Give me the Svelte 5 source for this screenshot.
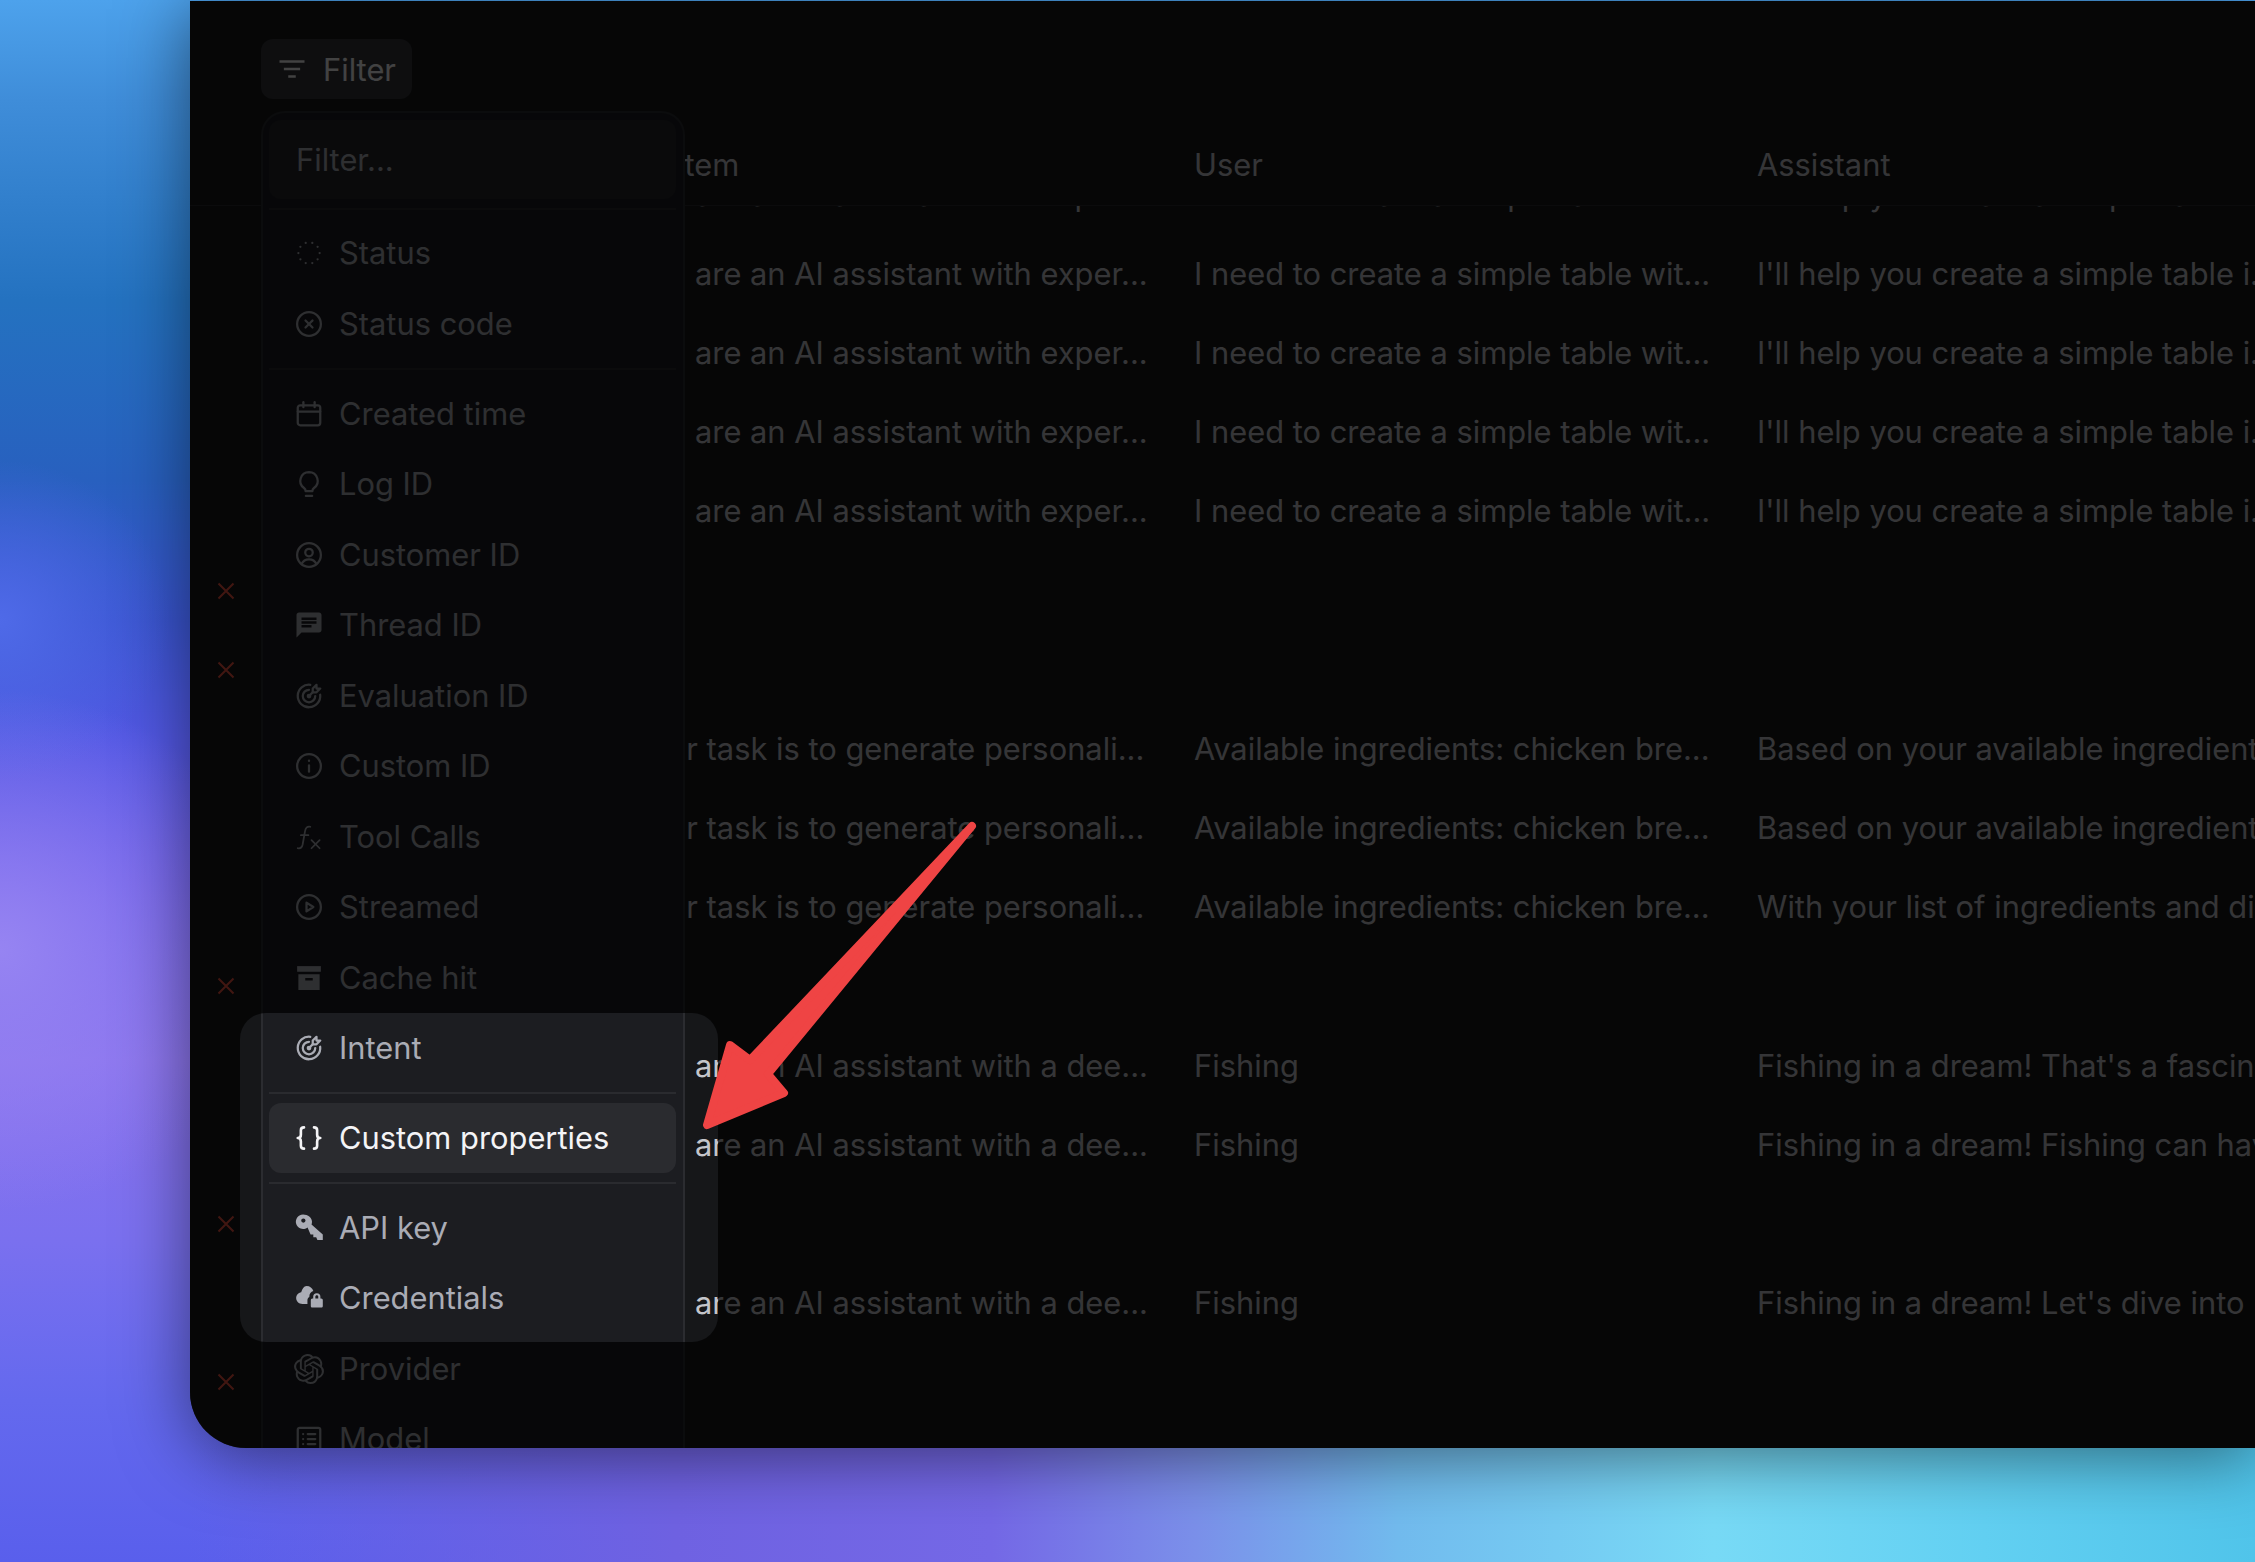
<script>
  const sysChart = "You are an AI assistant with exper...";
  const userChart = "I need to create a simple table wit...";
  const asstChart = "I'll help you create a simple table i...";
  const sysRecipe = "Your task is to generate personali...";
  const userRecipe = "Available ingredients: chicken bre...";
  const sysDream = "You are an AI assistant with a dee...";

  const rows = [
    { sys: sysChart, user: userChart, asst: asstChart },
    { sys: sysChart, user: userChart, asst: asstChart },
    { sys: sysChart, user: userChart, asst: asstChart },
    { sys: sysChart, user: userChart, asst: asstChart },
    { sys: sysChart, user: userChart, asst: asstChart },
    { failed: true },
    { failed: true },
    { sys: sysRecipe, user: userRecipe, asst: "Based on your available ingredients, I can suggest" },
    { sys: sysRecipe, user: userRecipe, asst: "Based on your available ingredients, I can suggest" },
    { sys: sysRecipe, user: userRecipe, asst: "With your list of ingredients and dietary needs" },
    { failed: true },
    { sys: sysDream, user: "Fishing", asst: "Fishing in a dream! That's a fascinating image" },
    { sys: sysDream, user: "Fishing", asst: "Fishing in a dream! Fishing can have many" },
    { failed: true },
    { sys: sysDream, user: "Fishing", asst: "Fishing in a dream! Let's dive into" },
    { failed: true }
  ];

  // ring of dots for the status icon
  const dotRing = Array.from({ length: 10 }, (_, i) => {
    const a = (i / 10) * Math.PI * 2;
    const x = (12 + 8.5 * Math.cos(a)).toFixed(2);
    const y = (12 + 8.5 * Math.sin(a)).toFixed(2);
    return `M${x} ${y}v.01`;
  });

  // icon paths on a 24 box; fill icons use the solid flag
  const icons = {
    filter: { d: ["M3 6h18", "M6.5 12h11", "M10 18h4"] },
    dots: { d: dotRing },
    xcircle: { d: ["M12 2.500a9.500 9.500 0 1 0 0 19a9.500 9.500 0 1 0 0-19z", "M9.200 9.200l5.600 5.600", "M14.800 9.200l-5.600 5.600"] },
    calendar: { d: ["M5 5h14a2 2 0 0 1 2 2v12a2 2 0 0 1-2 2H5a2 2 0 0 1-2-2V7a2 2 0 0 1 2-2z", "M3 10h18", "M7.500 2.500v4", "M16.500 2.500v4"] },
    bulb: { d: ["M12 2.500a7 7 0 0 0-4 12.700c.8.6 1.300 1.500 1.300 2.500h5.400c0-1 .5-1.900 1.300-2.500a7 7 0 0 0-4-12.700z", "M9.500 21.500h5"] },
    user: { d: ["M12 2.500a9.500 9.500 0 1 0 0 19a9.500 9.500 0 1 0 0-19z", "M12 7a3 3 0 1 0 0 6a3 3 0 1 0 0-6z", "M6.200 19c1-2.400 3.200-3.600 5.800-3.600s4.800 1.200 5.800 3.600"] },
    chat: { solid: true, d: ["M20 2H4c-1.100 0-1.990.9-1.990 2L2 22l4-4h14c1.100 0 2-.9 2-2V4c0-1.100-.9-2-2-2zM6 9h12v2H6V9zm8 5H6v-2h8v2zm4-6H6V6h12v2z"] },
    target: { d: ["M12 11a1 1 0 1 0 0 2a1 1 0 1 0 0-2z", "M12 7a5 5 0 1 0 5 5", "M13 3.055a9 9 0 1 0 7.941 7.945", "M15 6v3h3l3-3h-3V3z", "M15 9l-3 3"] },
    info: { d: ["M12 2.500a9.500 9.500 0 1 0 0 19a9.500 9.500 0 1 0 0-19z", "M12 11.500v5", "M12 7.600v.3"] },
    fx: { thin: true, d: ["M3 21c2.200.4 3.400-.6 3.900-3l1.900-10.500C9.300 4.600 10.700 3.300 13 3.800", "M5.500 10.500h6", "M14 14.500l6.500 6.500", "M20.500 14.500L14 21"] },
    play: { d: ["M12 2.500a9.500 9.500 0 1 0 0 19a9.500 9.500 0 1 0 0-19z", "M10 8.500l5.500 3.500l-5.500 3.500z"] },
    archive: { solid: true, d: ["M2.500 2.500h19v4.500h-19z", "M3.500 9h17v12.500h-17zM9 12v2h6v-2z"] },
    braces: { heavy: true, d: ["M8 3.500c-1.700 0-2.500.8-2.500 2.300v3.500c0 1.700-.8 2.700-2.500 2.700c1.700 0 2.500 1 2.500 2.700v3.500c0 1.500.8 2.300 2.500 2.300", "M16 3.500c1.700 0 2.500.8 2.500 2.300v3.500c0 1.700.8 2.700 2.500 2.700c-1.700 0-2.500 1-2.500 2.700v3.500c0 1.500-.8 2.300-2.500 2.300"] },
    key: { solid: true, box: "-2 0 25 25", d: ["M7 1.500a6 6 0 0 1 5.600 8.100l9.400 8.400v4.500h-4.500l-1-2.300h-2.400v-2.300h-2.300L9.300 12a6 6 0 1 1-2.300-10.500zM5.800 4.500a1.800 1.800 0 1 0 0 3.600a1.800 1.800 0 0 0 0-3.600z"] },
    cloud: { solid: true, box: "-1 1 25 25", d: ["M9.500 3.500c2.700 0 4.900 1.700 5.600 4.100c-2 .6-3.300 2.300-3.300 4.400v.6c-1 .5-1.600 1.500-1.600 2.600v3.300H6c-3 0-5.200-2.200-5.200-4.900c0-2.400 1.800-4.500 4.200-4.800c.8-2.700 2.200-5.300 4.500-5.300z", "M18 9.500a3 3 0 0 1 3 3v1.500h.6c.9 0 1.400.6 1.400 1.400v4.700c0 .8-.5 1.400-1.400 1.400h-7.200c-.9 0-1.400-.6-1.400-1.400v-4.700c0-.8.5-1.400 1.400-1.400h.6v-1.500a3 3 0 0 1 3-3zm0 1.800c-.7 0-1.200.5-1.200 1.200v1.500h2.400v-1.500c0-.7-.5-1.200-1.200-1.200z"] },
    openai: { solid: true, d: ["M22.2819 9.8211a5.9847 5.9847 0 0 0-.5157-4.9108 6.0462 6.0462 0 0 0-6.5098-2.9A6.0651 6.0651 0 0 0 4.9807 4.1818a5.9847 5.9847 0 0 0-3.9977 2.9 6.0462 6.0462 0 0 0 .7427 7.0966 5.98 5.98 0 0 0 .511 4.9107 6.051 6.051 0 0 0 6.5146 2.9001A5.9847 5.9847 0 0 0 13.2599 24a6.0557 6.0557 0 0 0 5.7718-4.2058 5.9894 5.9894 0 0 0 3.9977-2.9001 6.0557 6.0557 0 0 0-.7475-7.0729zm-9.022 12.6081a4.4755 4.4755 0 0 1-2.8764-1.0408l.1419-.0804 4.7783-2.7582a.7948.7948 0 0 0 .3927-.6813v-6.7369l2.02 1.1686a.071.071 0 0 1 .038.052v5.5826a4.504 4.504 0 0 1-4.4945 4.4944zm-9.6607-4.1254a4.4708 4.4708 0 0 1-.5346-3.0137l.142.0852 4.783 2.7582a.7712.7712 0 0 0 .7806 0l5.8428-3.3685v2.3324a.0804.0804 0 0 1-.0332.0615L9.74 19.9502a4.4992 4.4992 0 0 1-6.1408-1.6464zM2.3408 7.8956a4.485 4.485 0 0 1 2.3655-1.9728V11.6a.7664.7664 0 0 0 .3879.6765l5.8144 3.3543-2.0201 1.1685a.0757.0757 0 0 1-.071 0l-4.8303-2.7865A4.504 4.504 0 0 1 2.3408 7.872zm16.5963 3.8558L13.1038 8.364 15.1192 7.2a.0757.0757 0 0 1 .071 0l4.8303 2.7913a4.4944 4.4944 0 0 1-.6765 8.1042v-5.6772a.79.79 0 0 0-.407-.667zm2.0107-3.0231l-.142-.0852-4.7735-2.7818a.7759.7759 0 0 0-.7854 0L9.409 9.2297V6.8974a.0662.0662 0 0 1 .0284-.0615l4.8303-2.7866a4.4992 4.4992 0 0 1 6.6802 4.66zM8.3065 12.863l-2.02-1.1638a.0804.0804 0 0 1-.038-.0567V6.0742a4.4992 4.4992 0 0 1 7.3757-3.4537l-.142.0805L8.704 5.459a.7948.7948 0 0 0-.3927.6813zm1.0976-2.3654l2.602-1.4998 2.6069 1.4998v2.9994l-2.5974 1.4997-2.6067-1.4997Z"] },
    list: { d: ["M4.500 3h15a1.500 1.500 0 0 1 1.500 1.500v15a1.500 1.500 0 0 1-1.500 1.500h-15A1.500 1.500 0 0 1 3 19.500v-15A1.500 1.500 0 0 1 4.500 3z", "M7.300 8h.01", "M7.300 12h.01", "M7.300 16h.01", "M11 8h6", "M11 12h6", "M11 16h6"] }
  };

  const groups = [
    [
      { icon: "dots", label: "Status" },
      { icon: "xcircle", label: "Status code" }
    ],
    [
      { icon: "calendar", label: "Created time" },
      { icon: "bulb", label: "Log ID" },
      { icon: "user", label: "Customer ID" },
      { icon: "chat", label: "Thread ID" },
      { icon: "target", label: "Evaluation ID" },
      { icon: "info", label: "Custom ID" },
      { icon: "fx", label: "Tool Calls" },
      { icon: "play", label: "Streamed" },
      { icon: "archive", label: "Cache hit" },
      { icon: "target", label: "Intent" }
    ],
    [{ icon: "braces", label: "Custom properties", active: true }],
    [
      { icon: "key", label: "API key" },
      { icon: "cloud", label: "Credentials" },
      { icon: "openai", label: "Provider" },
      { icon: "list", label: "Model" }
    ]
  ];
</script>

{#snippet glyph(name, cls)}
  {@const ic = icons[name]}
  <svg class={cls} class:solid={ic.solid} class:thin={ic.thin} class:heavy={ic.heavy} viewBox={ic.box ?? "0 0 24 24"} aria-hidden="true">
    {#each ic.d as d}
      <path {d} />
    {/each}
  </svg>
{/snippet}

<div class="page">
  <div class="window">
    <div class="toolbar">
      <button class="filter-btn">
        {@render glyph("filter", "btn-icon")}
        <span>Filter</span>
      </button>
    </div>

    <div class="thead">
      <div></div>
      <div></div>
      <div>System</div>
      <div>User</div>
      <div>Assistant</div>
    </div>

    <div class="tbody">
      <div class="rows">
        {#each rows as row}
          <div class="row">
            <div class="status">
              {#if row.failed}
                <svg class="cross" viewBox="0 0 18 18"><path d="M1.500 1.500l15 15M16.500 1.500l-15 15" /></svg>
              {/if}
            </div>
            <div></div>
            <div class="cell">{row.sys ?? ""}</div>
            <div class="cell">{row.user ?? ""}</div>
            <div class="cell">{row.asst ?? ""}</div>
          </div>
        {/each}
      </div>
    </div>

    <div class="menu">
      <div class="search">Filter...</div>
      {#each groups as group}
        <div class="sep"></div>
        {#each group as item}
          <div class="item" class:active={item.active}>
            {@render glyph(item.icon, "item-icon")}
            <span>{item.label}</span>
          </div>
        {/each}
      {/each}
    </div>

    <!-- dims everything but the highlighted part of the menu -->
    <div class="spotlight"></div>
  </div>

  <svg class="arrow" viewBox="0 0 300 330" aria-hidden="true">
    <polygon points="272,26 68,274 84,293 7,325 30,245 50,260" />
  </svg>
</div>

<style>
  :global(body) {
    margin: 0;
    overflow: hidden;
  }

  .page {
    position: relative;
    box-sizing: border-box;
    width: 2255px;
    height: 1562px;
    padding: 1px 0 114px 190px;
    display: flex;
    overflow: hidden;
    font-family: Inter, "Liberation Sans", sans-serif;
    background:
      linear-gradient(90deg, rgba(112, 100, 228, 0) 8.4%, #6f62e2 30%, #7468e6 44%, #7b90ea 53%, #72bbee 62%, #78daf6 76%, #62d0f2 88%, #50c4ea 100%) bottom / 100% 200px no-repeat,
      radial-gradient(ellipse 280px 260px at 0 950px, #9684f2 0%, rgba(150, 132, 242, 0) 100%),
      radial-gradient(ellipse 170px 160px at 0 620px, #4f6ae8 0%, rgba(79, 106, 232, 0) 100%),
      linear-gradient(180deg, #4da2ec 0, #3f8dd9 100px, #2472c0 300px, #2860bf 480px, #3a55d0 620px, #5258e4 740px, #6c5eea 880px, #8a72ee 1060px, #7a70ef 1240px, #6469ee 1400px, #595fec 1562px);
  }

  .window {
    position: relative;
    flex: 1;
    min-width: 0;
    display: flex;
    flex-direction: column;
    overflow: hidden;
    background: #161719;
    border-radius: 0 0 0 56px;
    box-shadow: 0 8px 70px rgba(0, 0, 0, 0.5);
    color: #c4c5ca;
    font-size: 30.85px;
    line-height: 50px;
  }

  .toolbar {
    padding: 38px 0 0 71px;
  }

  .filter-btn {
    box-sizing: border-box;
    width: 151px;
    height: 60px;
    display: flex;
    align-items: center;
    gap: 16px;
    padding: 0 0 0 16px;
    border: 0;
    border-radius: 12px;
    background: #343539;
    color: #f2f2f4;
    font: 400 30.85px Inter, sans-serif;
  }

  .btn-icon {
    width: 30px;
    height: 30px;
    fill: none;
    stroke: currentColor;
    stroke-width: 2;
    stroke-linecap: square;
  }

  .thead,
  .row {
    display: grid;
    grid-template-columns: 71px 370px 563px 563px 1fr;
  }

  .thead {
    box-sizing: border-box;
    height: 107px;
    padding-top: 41px;
    border-bottom: 1px solid #2a2b2e;
  }

  .tbody {
    flex: 1;
    min-height: 0;
    overflow: hidden;
  }

  .rows {
    margin-top: -51px;
  }

  .row {
    height: 79.2px;
    align-items: center;
  }

  .status {
    display: flex;
    justify-content: center;
  }

  .cross {
    width: 18px;
    height: 18px;
    fill: none;
    stroke: #f0533f;
    stroke-width: 2;
  }

  .cell {
    white-space: nowrap;
  }

  .menu {
    position: absolute;
    left: 71px;
    top: 110px;
    box-sizing: border-box;
    width: 424px;
    padding: 7px 7px 0 6px;
    border-radius: 24px 24px 0 0;
    border: 2px solid #2b2c30;
    border-bottom: 0;
    background: #1c1d21;
    color: #aaacb5;
  }

  .search {
    box-sizing: border-box;
    height: 79px;
    padding: 0 0 0 27px;
    display: flex;
    align-items: center;
    border-radius: 12px;
    background: #25262a;
    color: #aaacb5;
  }

  .sep {
    height: 2px;
    margin: 8.6px 0;
    background: #2a2b2f;
  }

  .item {
    height: 70.5px;
    display: flex;
    align-items: center;
    gap: 15px;
    padding-left: 25px;
    border-radius: 12px;
  }

  .item.active {
    background: #2a2b2f;
    color: #f4f4f6;
  }

  .item-icon {
    flex: none;
    width: 30px;
    height: 30px;
    fill: none;
    stroke: currentColor;
    stroke-width: 1.8;
    stroke-linecap: round;
    stroke-linejoin: round;
  }

  .item-icon.solid {
    fill: currentColor;
    stroke: none;
  }

  .item-icon.thin {
    stroke-width: 1.4;
  }

  .item-icon.heavy {
    stroke-width: 2.1;
  }

  .spotlight {
    position: absolute;
    left: 50px;
    top: 1012px;
    width: 478px;
    height: 329px;
    border-radius: 26px;
    box-shadow: 0 0 0 3000px rgba(0, 0, 0, 0.73);
  }

  .arrow {
    position: absolute;
    left: 700px;
    top: 800px;
    width: 300px;
    height: 330px;
    fill: #ef4444;
    stroke: #ef4444;
    stroke-width: 8;
    stroke-linejoin: round;
  }
</style>
